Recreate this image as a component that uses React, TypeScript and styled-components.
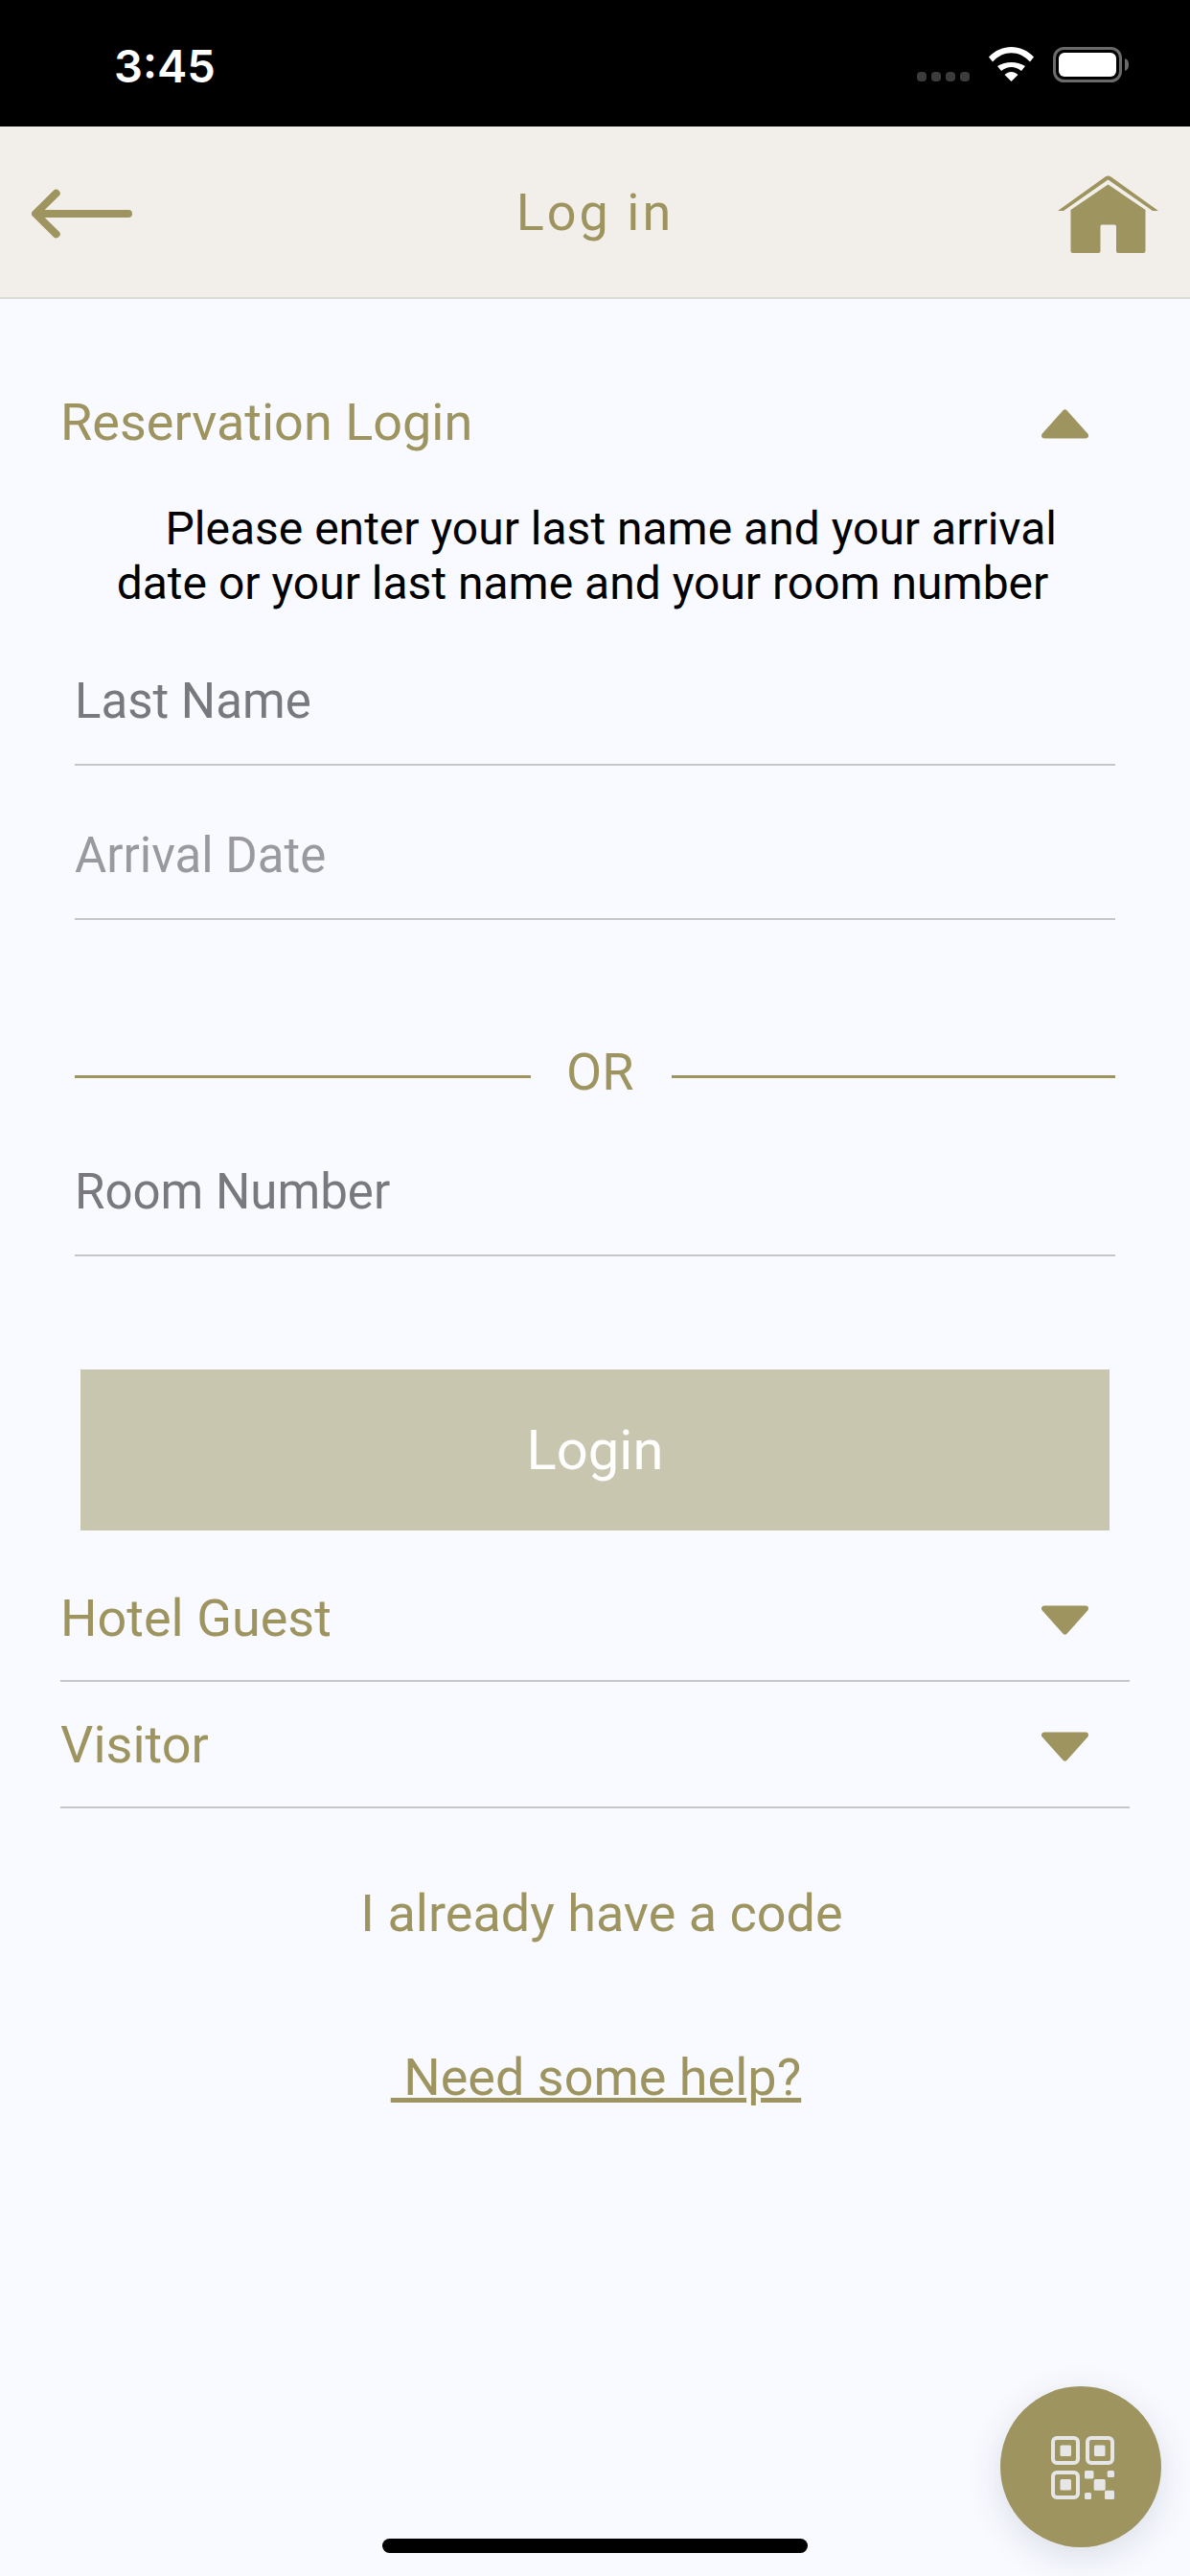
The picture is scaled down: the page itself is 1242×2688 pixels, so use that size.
import React from 'react';
import styled, { createGlobalStyle } from 'styled-components';

const GOLD = '#9d945f';

const GlobalStyle = createGlobalStyle`
  html, body {
    margin: 0;
    padding: 0;
    background: #f8faff;
  }
  * {
    box-sizing: border-box;
  }
`;

const Screen = styled.div`
  position: relative;
  width: 1242px;
  height: 2688px;
  overflow: hidden;
  background: #f8faff;
  font-family: Roboto, "Liberation Sans", sans-serif;
`;

const StatusBar = styled.div`
  height: 132px;
  background: #000;
  display: flex;
  align-items: center;
  justify-content: space-between;
  padding: 0 64px 0 119px;
`;

const Clock = styled.span`
  font-family: Inter, "Liberation Sans", sans-serif;
  font-weight: 600;
  font-size: 47px;
  line-height: 1;
  color: #fff;
  margin-top: 4px;
`;

const StatusIcons = styled.div`
  display: flex;
  align-items: center;
  gap: 20px;
  margin-top: 2px;
`;

const SignalSvg = styled.svg`
  margin-top: 25px;
`;

const Header = styled.header`
  height: 180px;
  background: #f2efea;
  border-bottom: 2px solid #dcdcd8;
  display: flex;
  align-items: center;
  justify-content: space-between;
  padding: 0 33px;
`;

const HeaderIcon = styled.svg`
  margin-top: 4px;
`;

const HeaderTitle = styled.h1`
  margin: 0;
  font-size: 54px;
  font-weight: 400;
  letter-spacing: 3px;
  color: ${GOLD};
`;

const Content = styled.main`
  padding: 0 63px;
`;

const SectionRow = styled.div<{ $top: number; $divided?: boolean }>`
  display: flex;
  align-items: center;
  justify-content: space-between;
  margin-top: ${({ $top }) => $top}px;
  height: ${({ $divided }) => ($divided ? 132 : 60)}px;
  padding-right: 43px;
  border-bottom: ${({ $divided }) => ($divided ? '2px solid #c6c6c8' : 'none')};
  font-size: 54px;
  color: ${GOLD};
`;

const CaretSvg = styled.svg<{ $up?: boolean }>`
  margin-top: 4px;
  transform: ${({ $up }) => ($up ? 'none' : 'rotate(180deg)')};
`;

const Instructions = styled.p`
  margin: 53px 52px 1px 26px;
  text-align: center;
  white-space: pre-wrap;
  font-size: 48px;
  line-height: 57px;
  color: #000;
`;

const Field = styled.div<{ $muted?: boolean }>`
  margin: 0 15px;
  height: 161px;
  padding: 0 0 36px;
  display: flex;
  align-items: flex-end;
  border-bottom: 2px solid #c6c6c8;
  font-size: 51px;
  color: ${({ $muted }) => ($muted ? '#9a9a9e' : '#78787e')};
`;

const Divider = styled.div`
  display: flex;
  align-items: center;
  gap: 37px;
  margin: 128px 15px 2px;
  height: 60px;
  font-size: 54px;
  color: ${GOLD};
`;

const DividerLabel = styled.span`
  margin-right: 3px;
`;

const DividerLine = styled.span<{ $width?: number }>`
  flex: ${({ $width }) => ($width ? `0 0 ${$width}px` : '1')};
  height: 3px;
  margin-top: 11px;
  background: ${GOLD};
`;

const LoginButton = styled.button`
  display: block;
  width: 1074px;
  height: 168px;
  margin: 118px 0 26px 21px;
  border: 0;
  padding: 0;
  background: #c8c6ae;
  color: #fff;
  font-family: inherit;
  font-size: 58px;
`;

const TextAction = styled.div<{ $top: number; $inset: number; $underline?: boolean }>`
  margin-top: ${({ $top }) => $top}px;
  padding-left: ${({ $inset }) => $inset}px;
  text-align: center;
  font-size: 54px;
  line-height: 60px;
  color: ${GOLD};
  text-decoration: ${({ $underline }) => ($underline ? 'underline' : 'none')};
  white-space: pre;
`;

const QrButton = styled.div`
  position: absolute;
  left: 1044px;
  top: 2490px;
  width: 168px;
  height: 168px;
  padding: 2px 0 0 4px;
  border-radius: 50%;
  background: ${GOLD};
  box-shadow: 0 10px 36px rgba(60, 60, 90, 0.14);
  display: flex;
  align-items: center;
  justify-content: center;
`;

const HomeIndicator = styled.div`
  position: absolute;
  left: 399px;
  top: 2649px;
  width: 444px;
  height: 15px;
  border-radius: 8px;
  background: #000;
`;

const Wifi = () => (
  <svg width="47" height="36" viewBox="0 0 47 36">
    <path d="M0 10.5C13 -3.5 34 -3.5 47 10.5L43 15.5C32 3 15 3 4 15.5Z" fill="#fff" />
    <path d="M9 20C18 14.7 29 14.7 38 20L34 25C27 19.5 20 19.5 13 25Z" fill="#fff" />
    <path d="M16.5 29C21 25 26 25 30.5 29L23.5 36Z" fill="#fff" />
  </svg>
);

const Battery = () => (
  <svg width="79" height="37" viewBox="0 0 79 37">
    <rect x="1.5" y="1.5" width="69" height="34" rx="10" fill="none" stroke="#6a6a6a" strokeWidth="3" />
    <rect x="6" y="6" width="60" height="25" rx="6" fill="#fff" />
    <path d="M75 12C78 13 79 15 79 18.5C79 22 78 24 75 25Z" fill="#6a6a6a" />
  </svg>
);

const SignalDots = () => (
  <SignalSvg width="55" height="10" viewBox="0 0 55 10">
    {[0, 15, 30, 45].map((x) => (
      <rect key={x} x={x} y="0" width="10" height="10" rx="4" fill="#3c3c3c" />
    ))}
  </SignalSvg>
);

const BackArrow = () => (
  <HeaderIcon width="105" height="52" viewBox="0 0 105 52">
    <path d="M101 26H5M25.7 4.7L4 26L25.7 47.3" fill="none" stroke={GOLD} strokeWidth="8" strokeLinecap="round" strokeLinejoin="round" />
  </HeaderIcon>
);

const HomeIcon = () => (
  <HeaderIcon width="105" height="81" viewBox="0 0 105 81">
    <path d="M0 37L49.5 1.5Q52.5 -0.5 55.5 1.5L105 37H99L52.5 4.5L6 37Z" fill={GOLD} />
    <path d="M13.5 36L52.5 9.5L91.5 36V79Q91.5 81 89.5 81H63Q61 81 61 79V53Q61 51.5 59 51.5H46Q44.5 51.5 44.5 53V79Q44.5 81 42.5 81H15.5Q13.5 81 13.5 79Z" fill={GOLD} />
  </HeaderIcon>
);

const Caret = ({ up }: { up?: boolean }) => (
  <CaretSvg $up={up} width="49" height="31" viewBox="0 0 49 31">
    <path d="M24.5 3.5L46 27.5H3Z" fill={GOLD} stroke={GOLD} strokeWidth="6" strokeLinejoin="round" />
  </CaretSvg>
);

const QrIcon = () => (
  <svg width="66" height="66" viewBox="0 0 66 66">
    <g fill="none" stroke="#e6e6e6" strokeWidth="4">
      <rect x="2" y="2" width="26" height="26" rx="4" />
      <rect x="38" y="2" width="26" height="26" rx="4" />
      <rect x="2" y="38" width="26" height="26" rx="4" />
    </g>
    <g fill="#e6e6e6">
      <rect x="9.5" y="9.5" width="11.5" height="11.5" rx="1.5" />
      <rect x="45" y="9.5" width="11.5" height="11.5" rx="1.5" />
      <rect x="9.5" y="45" width="11.5" height="11.5" rx="1.5" />
      <rect x="35" y="36" width="9.5" height="8.5" rx="1.5" />
      <rect x="58.7" y="36" width="7.3" height="7" rx="1.5" />
      <rect x="44.7" y="45" width="12" height="11.7" rx="1.5" />
      <rect x="35" y="59" width="7" height="7" rx="1.5" />
      <rect x="56" y="56.7" width="10" height="9.3" rx="1.5" />
    </g>
  </svg>
);

export default function App() {
  return (
    <Screen>
      <GlobalStyle />
      <StatusBar>
        <Clock>3:45</Clock>
        <StatusIcons>
          <SignalDots />
          <Wifi />
          <Battery />
        </StatusIcons>
      </StatusBar>
      <Header>
        <BackArrow />
        <HeaderTitle>Log in</HeaderTitle>
        <HomeIcon />
      </Header>
      <Content>
        <SectionRow $top={98}>
          Reservation Login
          <Caret up />
        </SectionRow>
        <Instructions>
          {'     Please enter your last name and your arrival date or your last name and your room number'}
        </Instructions>
        <Field>Last Name</Field>
        <Field $muted>Arrival Date</Field>
        <Divider>
          <DividerLine $width={476} />
          <DividerLabel>OR</DividerLabel>
          <DividerLine />
        </Divider>
        <Field>Room Number</Field>
        <LoginButton>Login</LoginButton>
        <SectionRow $top={0} $divided>
          Hotel Guest
          <Caret />
        </SectionRow>
        <SectionRow $top={0} $divided>
          Visitor
          <Caret />
        </SectionRow>
        <TextAction $top={80} $inset={14}>I already have a code</TextAction>
        <TextAction $top={111} $inset={2} $underline>{' Need some help?'}</TextAction>
      </Content>
      <QrButton>
        <QrIcon />
      </QrButton>
      <HomeIndicator />
    </Screen>
  );
}
